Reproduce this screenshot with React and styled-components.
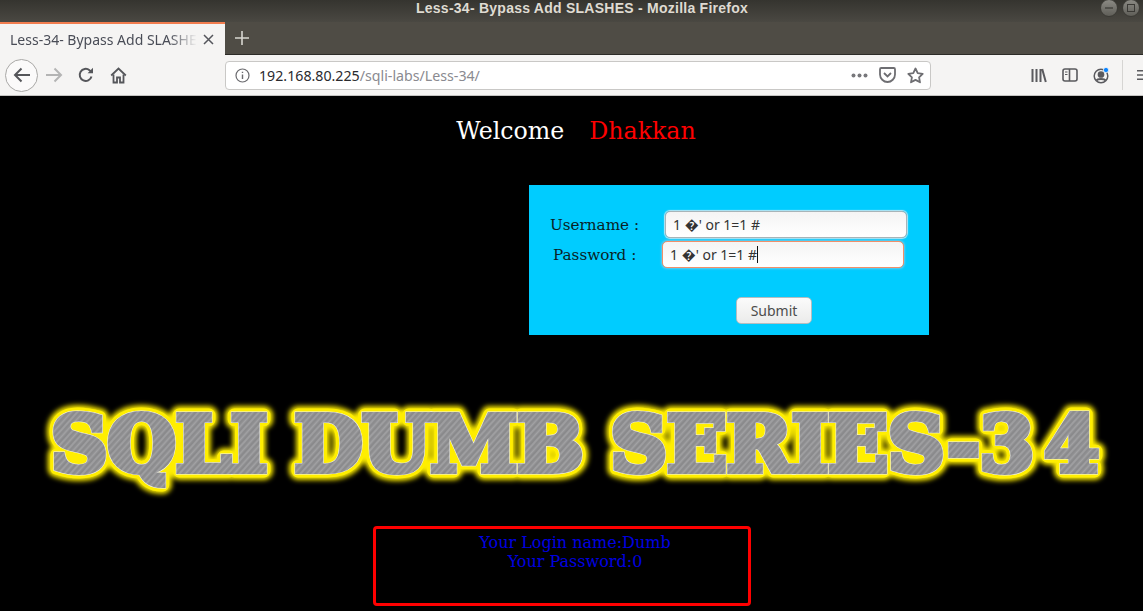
import React from 'react';
import styled, { createGlobalStyle } from 'styled-components';

const GlobalStyle = createGlobalStyle`
  html, body {
    margin: 0;
    height: 100%;
    background: #000;
    overflow: hidden;
  }
`

const uiFont = `"Noto Sans", "Open Sans", "DejaVu Sans", sans-serif`
const pageFont = `"DejaVu Serif", "Liberation Serif", serif`

const Window = styled.div`
  width: 1143px;
  height: 611px;
  display: flex;
  flex-direction: column;
  overflow: hidden;
  background: #000;
`

const TitleBar = styled.div`
  height: 22px;
  flex: none;
  position: relative;
  background: linear-gradient(#35342f, #4a4842);
  color: #dfdbd2;
  font: bold 14px/16px "Liberation Sans", Arial, sans-serif;
  letter-spacing: 0.25px;
  text-align: center;
  padding-left: 21px;
  box-sizing: border-box;
`

const WindowButtons = styled.div`
  position: absolute;
  top: -1px;
  left: 1100px;
  display: flex;
  gap: 4px;
`

const WindowButton = styled.div`
  width: 16px;
  height: 16px;
  border-radius: 50%;
  background: ${p => p.$close ? '#d9582a' : 'linear-gradient(#8b8a84, #5f5e58)'};
  border: 1px solid #3b3a35;
  display: flex;
  align-items: center;
  justify-content: center;
`

const TabBar = styled.div`
  height: 33px;
  flex: none;
  display: flex;
  background: #4f4c45;
  border-bottom: 1px solid #2c2b27;
  box-sizing: border-box;
`

const Tab = styled.div`
  width: 225px;
  height: 33px;
  box-sizing: border-box;
  border-top: 2px solid #f27d4f;
  background: #f5f4f3;
  display: flex;
  align-items: center;
  padding-left: 10px;
  gap: 6px;
  color: #4a4d57;
  font: 14px ${uiFont};
`

const TabTitle = styled.span`
  width: 187px;
  white-space: nowrap;
  overflow: hidden;
  -webkit-mask-image: linear-gradient(to right, #000 85%, transparent);
  mask-image: linear-gradient(to right, #000 85%, transparent);
`

const NewTab = styled.div`
  width: 34px;
  display: flex;
  align-items: center;
  justify-content: center;
`

const NavBar = styled.div`
  height: 40px;
  flex: none;
  display: flex;
  align-items: center;
  background: #f5f4f3;
  border-bottom: 1px solid #c4c3c1;
  padding-left: 5px;
`

const BackButton = styled.div`
  width: 33px;
  height: 33px;
  flex: none;
  border-radius: 50%;
  border: 1px solid #a9a8a6;
  background: #fbfafa;
  box-sizing: border-box;
  display: flex;
  align-items: center;
  justify-content: center;
`

const NavButton = styled.div`
  width: 32px;
  flex: none;
  display: flex;
  justify-content: center;
`

const UrlBar = styled.div`
  width: 706px;
  height: 29px;
  margin-left: 91px;
  flex: none;
  box-sizing: border-box;
  background: #fff;
  border: 1px solid #c9c8c6;
  border-radius: 4px;
  display: flex;
  align-items: center;
  padding: 0 6px 0 9px;
  font: 14.2px ${uiFont};
  color: #2a2a2e;
`

const UrlText = styled.span`
  margin-left: 9px;
  flex: 1;
  white-space: nowrap;
  span { color: #8a8a90; }
`

const UrlIcons = styled.div`
  display: flex;
  align-items: center;
  gap: 11px;
`

const ToolIcons = styled.div`
  display: flex;
  align-items: center;
  gap: 15px;
  margin-left: 100px;
`

const Divider = styled.div`
  width: 1px;
  height: 30px;
  background: #d6d5d3;
  margin: 0 14px 0 12px;
`

const Content = styled.main`
  flex: 1;
  background: #000;
  font-family: ${pageFont};
`

const Welcome = styled.div`
  height: 89px;
  padding: 21px 0 0 9px;
  box-sizing: border-box;
  display: flex;
  justify-content: center;
  gap: 25px;
  font-size: 23.7px;
  line-height: 28px;
  color: #fff;
  span:last-child { color: #f00; }
`

const LoginPanel = styled.form`
  width: 400px;
  height: 150px;
  margin-left: 529px;
  box-sizing: border-box;
  padding-top: 26px;
  background: #00ccff;
  display: flex;
  flex-direction: column;
  gap: 3px;
`

const Row = styled.div`
  display: flex;
  align-items: center;
  height: 27px;
  padding-left: ${p => p.$left}px;
`

const Label = styled.label`
  width: ${p => p.$width}px;
  flex: none;
  font-size: 15.2px;
  color: #0a1f26;
  white-space: nowrap;
`

const Field = styled.div`
  width: ${p => p.$width}px;
  height: 27px;
  box-sizing: border-box;
  border-radius: 5px;
  background: linear-gradient(#f4f4f4, #ffffff);
  border: 1px solid ${p => p.$focused ? '#f0906a' : '#a8b4b8'};
  box-shadow: ${p => p.$focused ? '0 0 2px 1px #6ac9ec' : '0 0 1px 1px #b8e6f4'};
  padding-left: 7px;
  display: flex;
  align-items: center;
  font: 14px ${uiFont};
  color: #333;
`

const Caret = styled.span`
  width: 1px;
  height: 17px;
  background: #111;
`

const SubmitRow = styled.div`
  margin-top: 26px;
  padding-left: 207px;
`

const SubmitButton = styled.button`
  width: 76px;
  height: 27px;
  padding: 0;
  border-radius: 5px;
  border: 1px solid #b5bdc0;
  background: linear-gradient(#fbfbfb, #ebebea);
  font: 14px ${uiFont};
  color: #4c4c4c;
`

const Banner = styled.div`
  margin-top: 54px;
  height: 130px;
  svg { display: block; }
`

const ResultBox = styled.div`
  width: 378px;
  height: 80px;
  margin: 7px 0 0 373px;
  box-sizing: border-box;
  border: 3px solid #f00;
  border-radius: 4px;
  padding: 4px 0 0 26px;
  text-align: center;
  color: #0000e0;
  font-size: 16px;
  line-height: 19px;
`

const Arrow = ({color, flip}) => (
  <svg width="20" height="18" viewBox="0 0 20 18" fill="none" stroke={color} strokeWidth="2" style={flip ? {transform: 'scaleX(-1)'} : undefined}>
    <path d="M18 9H3M9.5 2.5L3 9l6.5 6.5" />
  </svg>
)

const ReloadIcon = () => (
  <svg width="16" height="16" viewBox="0 0 16 16" fill="none" stroke="#55565a" strokeWidth="2">
    <path d="M13.5 9.5A6 6 0 1 1 11.5 3.2L14 5" />
    <path d="M15 .8V6.2H9.6z" fill="#55565a" stroke="none" />
  </svg>
)

const HomeIcon = () => (
  <svg width="17" height="17" viewBox="0 0 17 17" fill="none" stroke="#55565a" strokeWidth="1.8">
    <path d="M1.2 8.5L8.5 1.5l7.3 7" />
    <path d="M3.5 7.5V15.5H7V10.5H10V15.5H13.5V7.5" />
  </svg>
)

const InfoIcon = () => (
  <svg width="15" height="15" viewBox="0 0 15 15" fill="none" stroke="#6a6a6e" strokeWidth="1.2">
    <circle cx="7.5" cy="7.5" r="6.5" />
    <path d="M7.5 6.5V11M7.5 3.8V5" strokeWidth="1.4" />
  </svg>
)

const Dots = () => (
  <svg width="17" height="5" viewBox="0 0 17 5" fill="#77777b">
    <circle cx="2.5" cy="2.5" r="2" />
    <circle cx="8.5" cy="2.5" r="2" />
    <circle cx="14.5" cy="2.5" r="2" />
  </svg>
)

const PocketIcon = () => (
  <svg width="17" height="16" viewBox="0 0 17 16" fill="none" stroke="#6e6e72" strokeWidth="1.8">
    <path d="M1 2.2C1 1.5 1.5 1 2.2 1H14.8C15.5 1 16 1.5 16 2.2V7.5C16 11.5 12.5 15 8.5 15S1 11.5 1 7.5z" />
    <path d="M5 6l3.5 3.5L12 6" />
  </svg>
)

const StarIcon = () => (
  <svg width="17" height="17" viewBox="0 0 17 17" fill="none" stroke="#6e6e72" strokeWidth="1.8" strokeLinejoin="round">
    <path d="M8.5 1.5l2.2 4.6 5 .7-3.6 3.5.9 5-4.5-2.4L4 15.3l.9-5L1.3 6.8l5-.7z" />
  </svg>
)

const LibraryIcon = () => (
  <svg width="16" height="15" viewBox="0 0 16 15" fill="none" stroke="#5a5a5e" strokeWidth="2">
    <path d="M1.5 1v13M5.5 1v13M9.5 1v13M11.2 1l3.6 13" />
  </svg>
)

const SidebarIcon = () => (
  <svg width="16" height="14" viewBox="0 0 16 14" fill="none" stroke="#5a5a5e" strokeWidth="1.6">
    <rect x="1" y="1" width="14" height="12" rx="2" />
    <path d="M7.5 1v12" />
    <path d="M3 4h2.5M3 6.5h2.5" strokeWidth="1.2" />
  </svg>
)

const AccountIcon = () => (
  <svg width="17" height="17" viewBox="0 0 17 17" fill="none" stroke="#5a5a5e" strokeWidth="1.5">
    <circle cx="8" cy="9" r="6.8" />
    <circle cx="8" cy="7.5" r="2.6" fill="#5a5a5e" />
    <path d="M3.5 13.5C4.5 11.5 11.5 11.5 12.5 13.5" strokeWidth="2" />
    <circle cx="13" cy="3" r="2.6" fill="#0a84ff" stroke="#f5f4f3" strokeWidth="0.8" />
  </svg>
)

const MenuIcon = () => (
  <svg width="8" height="14" viewBox="0 0 8 14" fill="none" stroke="#5a5a5e" strokeWidth="2">
    <path d="M0 1.5h8M0 7h8M0 12.5h8" />
  </svg>
)

const TitleArt = () => (
  <svg width="1143" height="130" viewBox="0 0 1143 130">
    <defs>
      <pattern id="brushed" width="9" height="9" patternUnits="userSpaceOnUse" patternTransform="rotate(-48)">
        <rect width="9" height="9" fill="#949496" />
        <path d="M0 1H9" stroke="#a9a9ab" strokeWidth="1" />
        <path d="M0 3H9" stroke="#848486" strokeWidth="1" />
        <path d="M0 5.5H9" stroke="#a2a2a4" strokeWidth="1" />
        <path d="M0 8H9" stroke="#808082" strokeWidth="1" />
      </pattern>
      <filter id="glow" x="-5%" y="-30%" width="110%" height="160%">
        <feGaussianBlur stdDeviation="2.4" />
      </filter>
      <text id="seriesTitle" x="51" y="82" textLength="1048" lengthAdjust="spacingAndGlyphs"
        fontFamily={pageFont} fontWeight="bold" fontSize="76">SQLI DUMB SERIES-3<tspan dx="10">4</tspan></text>
    </defs>
    <use href="#seriesTitle" fill="#ffee00" stroke="#ffee00" strokeWidth="18" strokeLinejoin="round" filter="url(#glow)" />
    <use href="#seriesTitle" fill="#ffee00" stroke="#ffee00" strokeWidth="13" strokeLinejoin="round" />
    <use href="#seriesTitle" fill="#f2f2e6" stroke="#f2f2e6" strokeWidth="7" strokeLinejoin="miter" />
    <use href="#seriesTitle" fill="url(#brushed)" stroke="url(#brushed)" strokeWidth="6" strokeLinejoin="miter" />
  </svg>
)

const App = () => {
  return (
    <Window>
      <GlobalStyle />
      <TitleBar>
        Less-34- Bypass Add SLASHES - Mozilla Firefox
        <WindowButtons>
          <WindowButton>
            <svg width="8" height="2"><path d="M0 1h8" stroke="#3a3935" strokeWidth="1.2" /></svg>
          </WindowButton>
          <WindowButton>
            <svg width="8" height="8"><rect x=".5" y=".5" width="7" height="7" fill="none" stroke="#3a3935" /></svg>
          </WindowButton>
          <WindowButton $close />
        </WindowButtons>
      </TitleBar>
      <TabBar>
        <Tab>
          <TabTitle>Less-34- Bypass Add SLASHES - Mozilla Firefox</TabTitle>
          <svg width="11" height="11" viewBox="0 0 11 11" stroke="#55565c" strokeWidth="1.5"><path d="M1 1l9 9M10 1l-9 9" /></svg>
        </Tab>
        <NewTab>
          <svg width="14" height="14" viewBox="0 0 14 14" stroke="#d8d6d0" strokeWidth="1.6"><path d="M7 0v14M0 7h14" /></svg>
        </NewTab>
      </TabBar>
      <NavBar>
        <BackButton><Arrow color="#55565a" /></BackButton>
        <NavButton><Arrow color="#b4b4b4" flip /></NavButton>
        <NavButton><ReloadIcon /></NavButton>
        <NavButton><HomeIcon /></NavButton>
        <UrlBar>
          <InfoIcon />
          <UrlText>192.168.80.225<span>/sqli-labs/Less-34/</span></UrlText>
          <UrlIcons>
            <Dots />
            <PocketIcon />
            <StarIcon />
          </UrlIcons>
        </UrlBar>
        <ToolIcons>
          <LibraryIcon />
          <SidebarIcon />
          <AccountIcon />
        </ToolIcons>
        <Divider />
        <MenuIcon />
      </NavBar>
      <Content>
        <Welcome><span>Welcome</span><span>Dhakkan</span></Welcome>
        <LoginPanel>
          <Row $left={21}>
            <Label $width={115}>Username :</Label>
            <Field $width={242}>1 �' or 1=1 #</Field>
          </Row>
          <Row $left={24}>
            <Label $width={109}>Password :</Label>
            <Field $width={242} $focused>1 �' or 1=1 #<Caret /></Field>
          </Row>
          <SubmitRow>
            <SubmitButton type="button">Submit</SubmitButton>
          </SubmitRow>
        </LoginPanel>
        <Banner><TitleArt /></Banner>
        <ResultBox>
          Your Login name:Dumb<br />
          Your Password:0
        </ResultBox>
      </Content>
    </Window>
  );
}

export default App;
